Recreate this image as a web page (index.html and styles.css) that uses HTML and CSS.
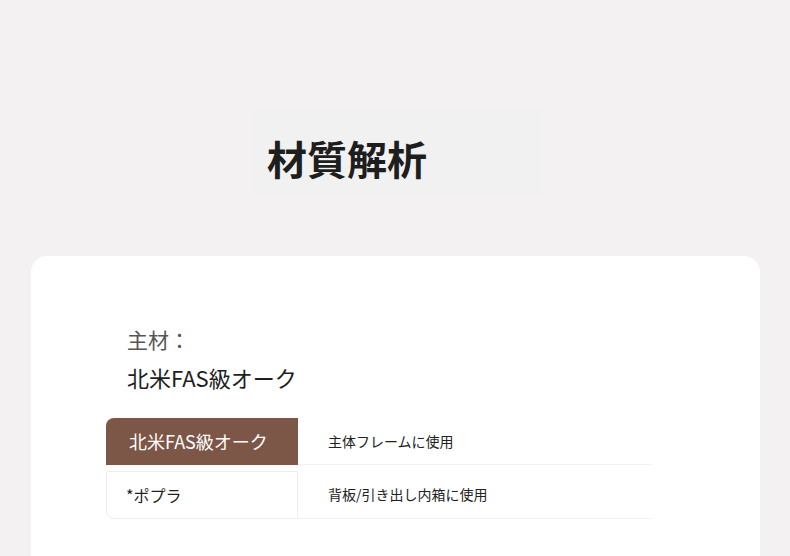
FILE: index.html
```html
<!DOCTYPE html>
<html lang="ja">
<head>
  <meta charset="UTF-8" />
  <meta name="viewport" content="width=device-width, initial-scale=1.0"/>
  <title>材質解析</title>
  <link rel="stylesheet" href="styles.css">
</head>
<body>
  <header class="hero">
    <div class="hero-box">
      <h1>材質解析</h1>
    </div>
  </header>

  <section class="card">
    <p class="label">主材：</p>
    <p class="value">北米FAS級オーク</p>

    <div class="table">
      <div class="row">
        <div class="cell-name main">北米FAS級オーク</div>
        <div class="cell-use">主体フレームに使用</div>
      </div>
      <div class="row">
        <div class="cell-name sub">*ポプラ</div>
        <div class="cell-use">背板/引き出し内箱に使用</div>
      </div>
    </div>
  </section>
</body>
</html>
```

FILE: styles.css
```css
body {
  margin: 0;
  background-color: #f3f1f1;
  font-family: "Noto Sans CJK JP", "Noto Sans", sans-serif;
  color: #222;
  overflow: hidden;
}

.hero {
  height: 256px;
  padding-top: 108px;
  box-sizing: border-box;
}

.hero-box {
  width: 291px;
  height: 87px;
  margin-left: 252px;
  padding: 30px 0 0 15px;
  box-sizing: border-box;
  background: #f1f1f1;
}

h1 {
  margin: 0;
  font-size: 40px;
  line-height: 1;
  font-weight: 700;
  color: #1e1e1e;
}

.card {
  margin: 0 30px 0 31px;
  height: 320px;
  background: #fff;
  border-radius: 16px 16px 0 0;
  padding: 68px 0 0 75px;
  box-sizing: border-box;
}

.label, .value {
  margin: 0;
  padding-left: 21px;
  line-height: 31.5px;
}

.label {
  font-size: 21px;
  color: #555;
}

.value {
  margin-top: 6.5px;
  font-size: 22px;
  color: #1e1e1e;
}

.table {
  margin-top: 24px;
}

.row {
  display: flex;
}

.row + .row {
  margin-top: 6px;
}

.cell-name {
  width: 192px;
  box-sizing: border-box;
  display: flex;
  align-items: center;
}

.cell-name.main {
  height: 47px;
  padding-left: 23px;
  background: #7c5646;
  color: #fff;
  font-size: 18px;
  border-radius: 8px 0 0 0;
}

.cell-name.sub {
  height: 48px;
  padding-left: 19px;
  border: 1px solid #ededed;
  border-radius: 2px 0 0 8px;
  font-size: 16px;
  color: #222;
}

.cell-use {
  width: 354px;
  box-sizing: border-box;
  padding-left: 30px;
  display: flex;
  align-items: center;
  font-size: 14px;
  color: #222;
  border-bottom: 1px solid #f2f2f2;
}
```
